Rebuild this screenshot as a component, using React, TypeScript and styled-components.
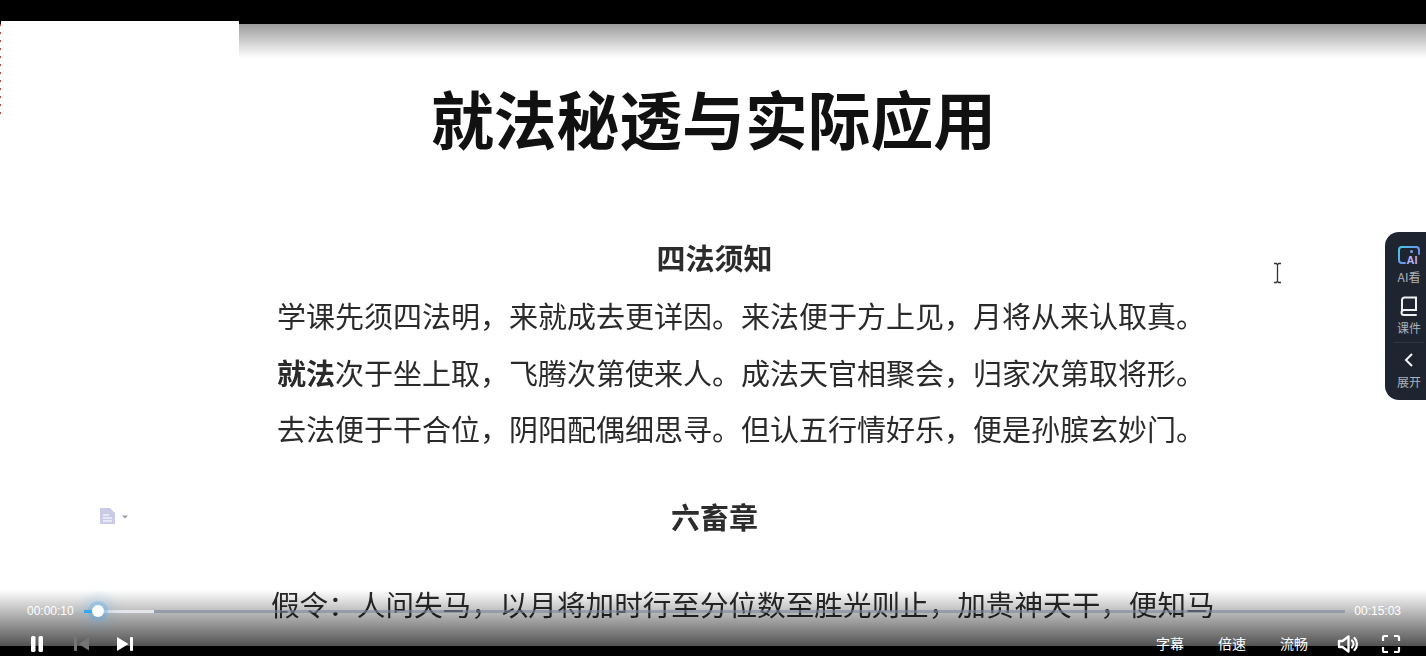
import React from "react";
import styled, { createGlobalStyle } from "styled-components";

const GlobalStyle = createGlobalStyle`
  html, body {
    margin: 0;
    padding: 0;
    background: #000;
    overflow: hidden;
  }
  body {
    font-family: "Noto Sans CJK SC", "Liberation Sans", sans-serif;
  }
`;

const Player = styled.div`
  position: relative;
  width: 1426px;
  height: 656px;
  display: flex;
  flex-direction: column;
  overflow: hidden;
  background: #fff;
`;

const BlackBar = styled.div<{ $height: number }>`
  flex: none;
  height: ${(p) => p.$height}px;
  background: #000;
`;

const Slide = styled.div`
  flex: 1;
  min-height: 0;
  overflow: hidden;
  display: flex;
  flex-direction: column;
  align-items: center;
  background: #fff;
  color: #2a2a2a;
  filter: blur(0.6px);
`;

const Title = styled.h1`
  margin: 51px 0 0 1px;
  font-size: 62.8px;
  line-height: 84px;
  font-weight: 700;
  color: #111;
  white-space: nowrap;
`;

const Heading = styled.h2<{ $top: number }>`
  margin: ${(p) => p.$top}px 0 0 3px;
  font-size: 29px;
  line-height: 40px;
  font-weight: 700;
  color: #2c2c2c;
  white-space: nowrap;
`;

const Verse = styled.div`
  align-self: flex-start;
  margin: 10px 0 0 277px;
  font-size: 29px;
  line-height: 56.5px;
  font-weight: 400;
  white-space: nowrap;
`;

const Strong = styled.b`
  font-weight: 700;
`;

const Example = styled.p`
  align-self: flex-start;
  margin: 48px 0 0 271px;
  font-size: 28.6px;
  line-height: 40px;
  font-weight: 400;
  white-space: nowrap;
`;

const TopFade = styled.div`
  position: absolute;
  left: 0;
  right: 0;
  top: 24px;
  height: 34px;
  background: linear-gradient(#9c9c9c, #fff);
`;

const LogoPatch = styled.div`
  position: absolute;
  left: 1px;
  top: 21px;
  width: 238px;
  height: 120px;
  background: #fff;
`;

const RedTicks = styled.div`
  position: absolute;
  left: 0;
  top: 24px;
  width: 1px;
  height: 92px;
  background: repeating-linear-gradient(#c0504d 0 2px, #fff 2px 8px);
`;

const DocMark = styled.svg`
  position: absolute;
  left: 99px;
  top: 507px;
  filter: blur(0.6px);
`;

const TextCursor = styled.svg`
  position: absolute;
  left: 1272px;
  top: 262px;
`;

const SidePanel = styled.div`
  position: absolute;
  right: 0;
  top: 232px;
  width: 41px;
  height: 168px;
  box-sizing: border-box;
  padding: 13px 0 0 7px;
  border-radius: 14px 0 0 14px;
  background: #1f2530;
  display: flex;
  flex-direction: column;
  align-items: center;
`;

const SideItem = styled.div`
  display: flex;
  flex-direction: column;
  align-items: center;
  gap: 5px;
  color: #aeb2b9;
  font-size: 12px;
  line-height: 14px;
  white-space: nowrap;
`;

const SideRule = styled.div`
  width: 30px;
  height: 1px;
  margin: 7px 0 7px;
  background: #2e3440;
`;

const SideGap = styled.div`
  height: 12px;
`;

const Controls = styled.div`
  position: absolute;
  left: 0;
  right: 0;
  bottom: 0;
  height: 66px;
  box-sizing: border-box;
  padding: 14px 25px 0 27px;
  background: linear-gradient(
    rgba(0, 0, 0, 0) 0,
    rgba(0, 0, 0, 0.68) 56px,
    rgba(0, 0, 0, 0.68) 66px
  );
  color: #fff;
  display: flex;
  flex-direction: column;
`;

const ProgressRow = styled.div`
  display: flex;
  align-items: center;
  gap: 9px;
  height: 14px;
`;

const Time = styled.span`
  flex: none;
  font-family: "Liberation Sans", sans-serif;
  font-size: 12px;
  line-height: 14px;
  color: #fff;
`;

const Track = styled.div`
  position: relative;
  flex: 1;
  height: 3px;
  margin-left: 1px;
  background: rgba(120, 135, 155, 0.6);
`;

const Buffered = styled.div<{ $width: number }>`
  position: absolute;
  left: 0;
  top: 0;
  height: 100%;
  width: ${(p) => p.$width}px;
  background: #e4e6ea;
`;

const Played = styled.div<{ $width: number }>`
  position: absolute;
  left: 0;
  top: 0;
  height: 100%;
  width: ${(p) => p.$width}px;
  background: #2aa8f5;
`;

const Thumb = styled.div<{ $left: number }>`
  position: absolute;
  left: ${(p) => p.$left - 6}px;
  top: -4.5px;
  width: 12px;
  height: 12px;
  border-radius: 50%;
  background: #fff;
  box-shadow: 0 0 0 4px rgba(90, 170, 240, 0.3), 0 0 12px 8px rgba(90, 170, 240, 0.25);
`;

const ButtonRow = styled.div`
  display: flex;
  align-items: center;
  height: 26px;
  margin-top: 13px;
`;

const IconButton = styled.div<{ $gap: number }>`
  flex: none;
  display: flex;
  align-items: center;
  justify-content: center;
  margin-right: ${(p) => p.$gap}px;
`;

const Spacer = styled.div`
  flex: 1;
`;

const Option = styled.span`
  flex: none;
  width: 28px;
  margin: 0 34px 2px 0;
  font-size: 14px;
  line-height: 20px;
  color: #fff;
  white-space: nowrap;

  &:last-of-type {
    margin-right: 29px;
  }
`;

const App: React.FC = () => {
  return (
    <Player>
      <GlobalStyle />
      <BlackBar $height={24} />
      <Slide>
        <Title>就法秘透与实际应用</Title>
        <Heading $top={78}>四法须知</Heading>
        <Verse>
          <div>学课先须四法明，来就成去更详因。来法便于方上见，月将从来认取真。</div>
          <div>
            <Strong>就法</Strong>次于坐上取，飞腾次第使来人。成法天官相聚会，归家次第取将形。
          </div>
          <div>去法便于干合位，阴阳配偶细思寻。但认五行情好乐，便是孙膑玄妙门。</div>
        </Verse>
        <Heading $top={39}>六畜章</Heading>
        <Example>假令：人问失马，以月将加时行至分位数至胜光则止，加贵神天干，便知马</Example>
      </Slide>
      <BlackBar $height={10} />

      <TopFade />
      <LogoPatch />
      <RedTicks />

      <DocMark width="30" height="18" viewBox="0 0 30 18">
        <path d="M1 1h10l5 5v11H1z" fill="#c9cbe6" />
        <path d="M4 8h6M4 11h9M4 14h9" stroke="#f1f1fa" strokeWidth="1.4" />
        <path d="M23 8.5h6l-3 3z" fill="#9a9aa0" />
      </DocMark>

      <TextCursor width="11" height="22" viewBox="0 0 11 22">
        <path
          d="M2 1.5h2.5L5.5 3l1-1.500H9M5.500 3v16M2 20.500h2.500l1-1.500 1 1.500H9"
          fill="none"
          stroke="#333"
          strokeWidth="1.300"
        />
      </TextCursor>

      <SidePanel>
        <SideItem>
          <svg width="22" height="20" viewBox="0 0 22 20" fill="none">
            <defs>
              <linearGradient id="aiGrad" x1="0" y1="0" x2="22" y2="20" gradientUnits="userSpaceOnUse">
                <stop offset="0" stopColor="#3fd0e8" />
                <stop offset="1" stopColor="#8a6cf5" />
              </linearGradient>
            </defs>
            <path
              d="M7 18H4a3 3 0 0 1-3-3V5a3 3 0 0 1 3-3h14a3 3 0 0 1 3 3v4"
              stroke="url(#aiGrad)"
              strokeWidth="2"
              strokeLinecap="round"
            />
            <circle cx="13.500" cy="6.500" r="1.500" fill="#6fa8f0" />
            <text
              x="8.500"
              y="18.500"
              fontFamily="Liberation Sans, sans-serif"
              fontSize="11"
              fontWeight="700"
              fill="#b7b4f7"
            >
              AI
            </text>
          </svg>
          <span>AI看</span>
        </SideItem>
        <SideGap />
        <SideItem>
          <svg width="20" height="20" viewBox="0 0 20 20" fill="none" stroke="#f0f1f3" strokeWidth="2">
            <path d="M3 15V4a2.500 2.500 0 0 1 2.500-2.500H17V14H5a2.500 2.500 0 0 0 0 5h12" strokeLinecap="round" />
          </svg>
          <span>课件</span>
        </SideItem>
        <SideRule />
        <SideItem>
          <svg width="20" height="20" viewBox="0 0 20 20" fill="none" stroke="#f4f5f6" strokeWidth="2">
            <path d="M13 4l-6 6 6 6" />
          </svg>
          <span>展开</span>
        </SideItem>
      </SidePanel>

      <Controls>
        <ProgressRow>
          <Time>00:00:10</Time>
          <Track>
            <Buffered $width={70} />
            <Played $width={14} />
            <Thumb $left={14} />
          </Track>
          <Time>00:15:03</Time>
        </ProgressRow>
        <ButtonRow>
          <IconButton $gap={26}>
            <svg width="20" height="18" viewBox="0 0 20 18" fill="#fff">
              <rect x="4" y="1" width="4.500" height="16" rx="1.500" />
              <rect x="11.500" y="1" width="4.500" height="16" rx="1.500" />
            </svg>
          </IconButton>
          <IconButton $gap={25}>
            <svg width="18" height="16" viewBox="0 0 18 16" fill="#757575">
              <rect x="1" y="1" width="3" height="14" rx="1" />
              <path d="M16 1.500v13L5.500 8z" />
            </svg>
          </IconButton>
          <IconButton $gap={0}>
            <svg width="18" height="16" viewBox="0 0 18 16" fill="#fff">
              <rect x="14" y="1" width="3" height="14" rx="1" />
              <path d="M1 1v14L12.500 8z" />
            </svg>
          </IconButton>
          <Spacer />
          <Option>字幕</Option>
          <Option>倍速</Option>
          <Option>流畅</Option>
          <IconButton $gap={22}>
            <svg width="22" height="20" viewBox="0 0 22 20" fill="none" stroke="#fff" strokeWidth="2.300">
              <path d="M2 7v6h3.500l6 4.500v-15l-6 4.500z" strokeLinejoin="round" />
              <path d="M15 6.500a5 5 0 0 1 0 7M17.500 4a8.500 8.500 0 0 1 0 12" strokeLinecap="round" />
            </svg>
          </IconButton>
          <IconButton $gap={0}>
            <svg width="20" height="20" viewBox="0 0 20 20" fill="none" stroke="#fff" strokeWidth="2.200">
              <path d="M2 7V3.500A1.500 1.500 0 0 1 3.500 2H7M13 2h3.500A1.500 1.500 0 0 1 18 3.500V7M18 13v3.500a1.500 1.500 0 0 1-1.500 1.500H13M7 18H3.500A1.500 1.500 0 0 1 2 16.500V13" />
            </svg>
          </IconButton>
        </ButtonRow>
      </Controls>
    </Player>
  );
};

export default App;
